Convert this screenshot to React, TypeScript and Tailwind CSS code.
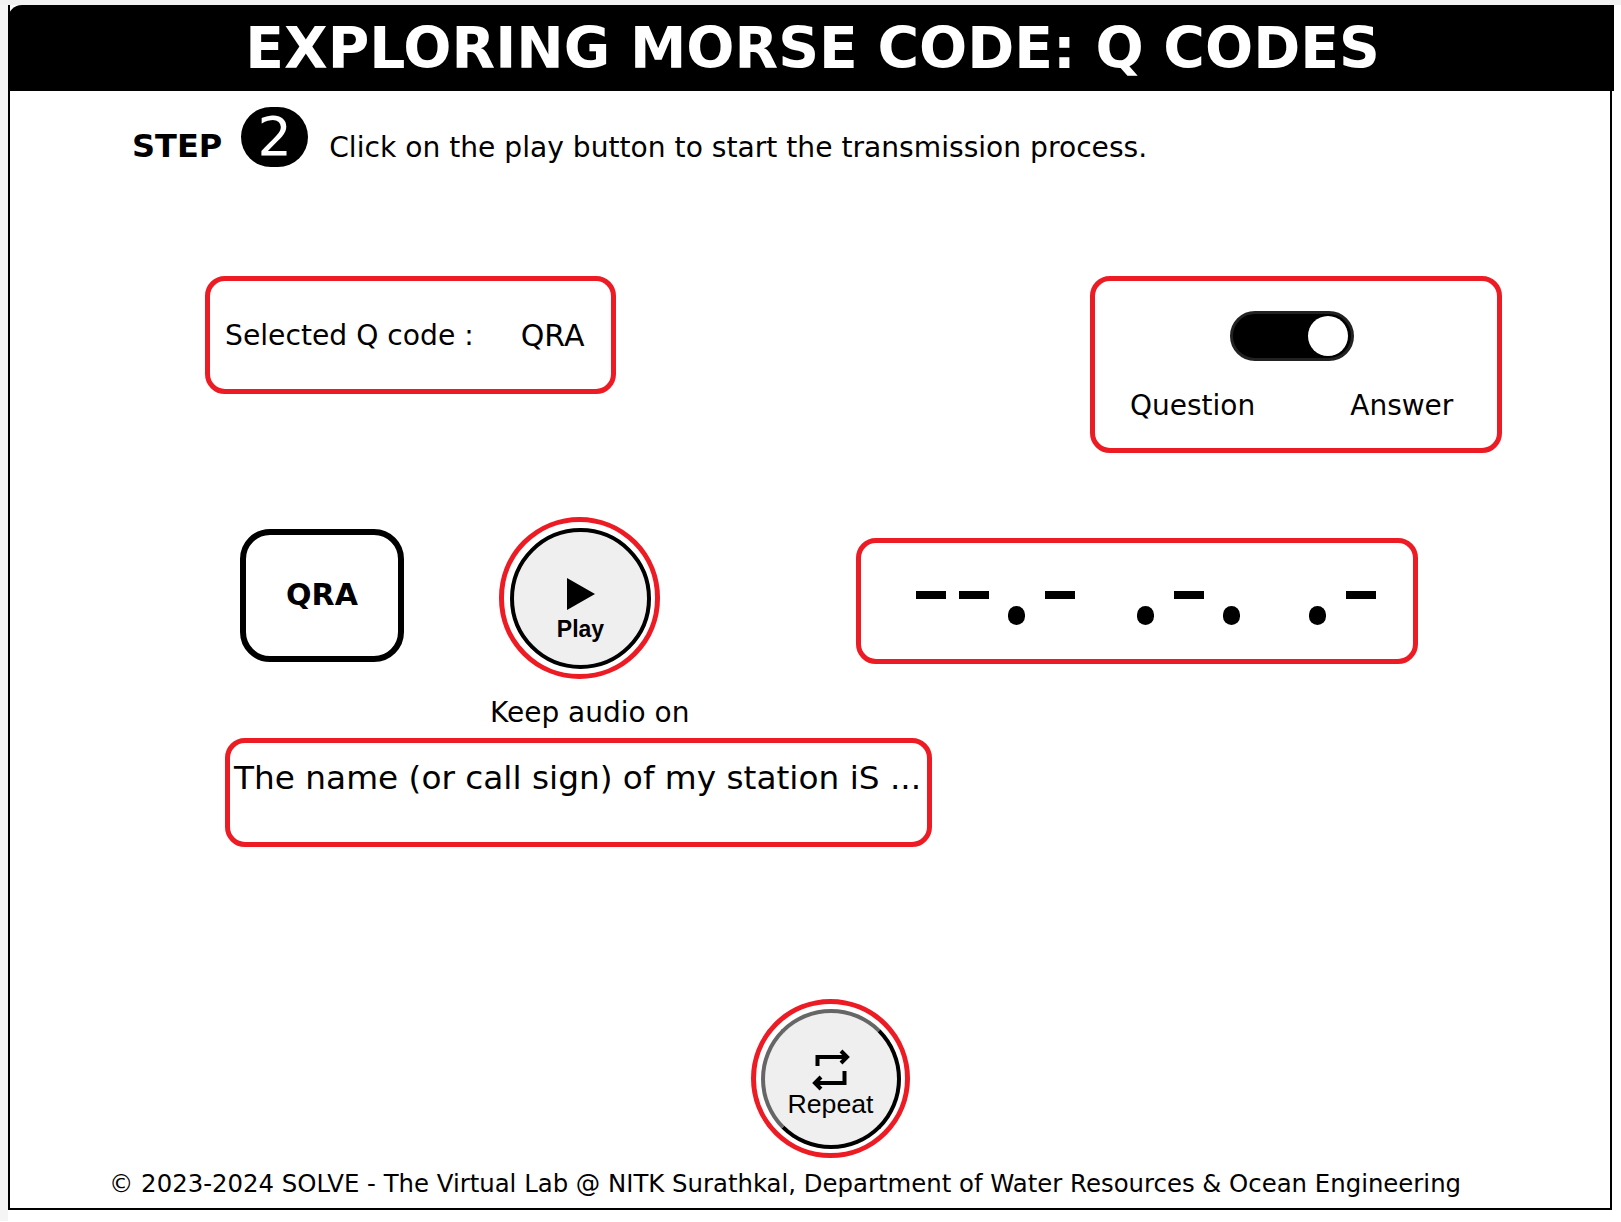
const morse = [
  'w-[30px] h-[8px] mt-[48px] ml-[55px]',
  'w-[30px] h-[8px] mt-[48px] ml-[13px]',
  'w-[17px] h-[19px] mt-[63px] ml-[19px] rounded-full',
  'w-[30px] h-[8px] mt-[48px] ml-[20px]',
  'w-[17px] h-[19px] mt-[63px] ml-[62px] rounded-full',
  'w-[30px] h-[8px] mt-[48px] ml-[20px]',
  'w-[17px] h-[19px] mt-[63px] ml-[19px] rounded-full',
  'w-[17px] h-[19px] mt-[63px] ml-[69px] rounded-full',
  'w-[30px] h-[8px] mt-[48px] ml-[20px]',
];

export default function App() {
  return (
    <div className="w-[1621px] h-[1222px] bg-white text-black overflow-hidden font-['DejaVu_Sans',sans-serif]">
      <div className="h-[5px] bg-[#f2f2f2]" />
      <div className="flex items-start">
        <div className="w-[8px] h-[1216px] bg-[#f5f5f5]" />
        <div className="w-[1604px] h-[1205px] border-x-2 border-b-2 border-black bg-white">
          {/* Title bar */}
          <div className="-ml-[2px] w-[1606px] h-[86px] bg-black rounded-tl-[14px] flex items-center justify-center pl-[3px]">
            <h1 className="text-[56.7px] leading-none font-bold text-white">EXPLORING MORSE CODE: Q CODES</h1>
          </div>

          {/* Step */}
          <div className="flex items-start mt-[16px] pl-[122px] h-[60px]">
            <span className="mt-[19px] text-[32px] leading-[40px] font-bold">STEP</span>
            <span className="ml-[19px] w-[67px] h-[60px] rounded-full bg-black text-white text-[54px] leading-[60px] text-center">2</span>
            <span className="ml-[21px] mt-[21px] text-[28.15px] leading-[40px]">Click on the play button to start the transmission process.</span>
          </div>

          {/* Selected code and question / answer switch */}
          <div className="flex items-start mt-[109px] pl-[195px]">
            <div className="w-[411px] h-[118px] border-[5px] border-[#ed1c24] rounded-[20px] flex items-start pl-[15px] pt-[35px] text-[28.2px] leading-[40px]">
              <span>Selected Q code :</span>
              <span className="ml-[47px] text-[30px]">QRA</span>
            </div>
            <div className="ml-[474px] w-[412px] h-[177px] border-[5px] border-[#ed1c24] rounded-[20px] flex flex-col">
              <div className="ml-[135px] mt-[30px] w-[124px] h-[50px] rounded-full bg-black border-[3px] border-[#222] flex items-center justify-end pr-[3px]">
                <div className="w-[40px] h-[40px] rounded-full bg-white" />
              </div>
              <div className="flex mt-[25px] pl-[35px] text-[28px] leading-[40px]">
                <span>Question</span>
                <span className="ml-[95px]">Answer</span>
              </div>
            </div>
          </div>

          {/* QRA, play, morse */}
          <div className="flex items-start mt-[64px] pl-[230px]">
            <div className="mt-[12px] w-[164px] h-[133px] border-[6px] border-black rounded-[30px] flex items-center justify-center text-[30px] leading-none font-bold pb-[2px]">
              QRA
            </div>
            <div className="ml-[95px] w-[161px] h-[162px] rounded-full border-[5px] border-[#ed1c24] flex items-center justify-center">
              <button className="w-[141px] h-[141px] ml-[1px] rounded-full border-[4px] border-black bg-[#efefef] flex flex-col items-center font-['Liberation_Sans',sans-serif]">
                <svg width="28" height="32" viewBox="0 0 28 32" className="mt-[46px] ml-[1px]">
                  <polygon points="0,0 28,16 0,32" fill="#000" />
                </svg>
                <span className="mt-[6px] ml-[1px] text-[23px] leading-[26px] font-bold">Play</span>
              </button>
            </div>
            <div className="ml-[196px] mt-[21px] w-[562px] h-[126px] border-[5px] border-[#ed1c24] rounded-[20px] flex items-start">
              {morse.map((c, i) => (
                <span key={i} className={'shrink-0 bg-black ' + c} />
              ))}
            </div>
          </div>

          <div className="pl-[480px] mt-[14px] text-[28px] leading-[40px]">Keep audio on</div>

          {/* Meaning of the code */}
          <div className="ml-[215px] mt-[5px] w-[707px] h-[109px] border-[5px] border-[#ed1c24] rounded-[20px] pl-[4px] pt-[13px] text-[32.75px] leading-[44px] whitespace-nowrap">
            The name (or call sign) of my station iS ...
          </div>

          {/* Repeat */}
          <div className="ml-[741px] mt-[152px] w-[159px] h-[159px] rounded-full border-[5px] border-[#ed1c24] flex items-center justify-center">
            <button className="w-[140px] h-[140px] rounded-full border-[4px] border-t-[#666] border-l-[#666] border-r-black border-b-black bg-[#efefef] flex flex-col items-center font-['Liberation_Sans',sans-serif]">
              <svg width="38" height="42" viewBox="0 0 38 42" fill="none" stroke="#000" strokeWidth="4" className="mt-[36px]">
                <path d="M5.5 17V8H35" />
                <path d="M29 2L35 8L29 14" />
                <path d="M32.5 22V34H3" />
                <path d="M9 28L3 34L9 40" />
              </svg>
              <span className="mt-[-3px] text-[26.7px] leading-[32px]">Repeat</span>
            </button>
          </div>

          <div className="pl-[99px] mt-[9px] text-[24.38px] leading-[34px] whitespace-nowrap">
            © 2023-2024 SOLVE - The Virtual Lab @ NITK Surathkal, Department of Water Resources &amp; Ocean Engineering
          </div>
        </div>
      </div>
    </div>
  );
}
